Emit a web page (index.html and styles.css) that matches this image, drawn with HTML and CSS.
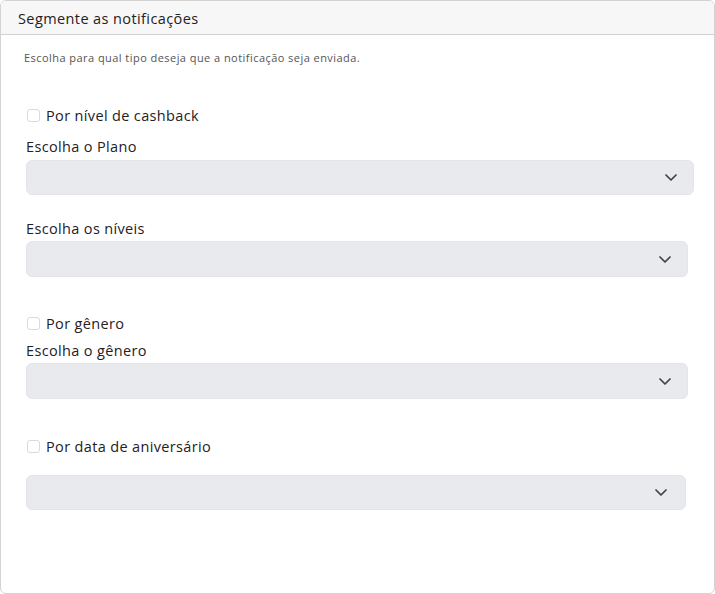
FILE: index.html
```html
<!DOCTYPE html>
<html lang="pt-BR">
<head>
<meta charset="utf-8">
<title>Segmente as notificações</title>
<link rel="stylesheet" href="styles.css">
</head>
<body>
<div class="card">
  <div class="card-header">Segmente as notificações</div>
  <div class="card-body">
    <p class="desc">Escolha para qual tipo deseja que a notificação seja enviada.</p>

    <label class="check check-first"><span class="box"></span>Por nível de cashback</label>
    <div class="field-label fl-a">Escolha o Plano</div>
    <div class="select sel-1"><svg class="chev" width="12" height="7" viewBox="0 0 12 7"><path d="M1 1l5 5 5-5" fill="none" stroke="#3f4247" stroke-width="1.7" stroke-linecap="round" stroke-linejoin="round"/></svg></div>
    <div class="field-label fl-b">Escolha os níveis</div>
    <div class="select sel-2"><svg class="chev" width="12" height="7" viewBox="0 0 12 7"><path d="M1 1l5 5 5-5" fill="none" stroke="#3f4247" stroke-width="1.7" stroke-linecap="round" stroke-linejoin="round"/></svg></div>

    <label class="check check-mid"><span class="box"></span>Por gênero</label>
    <div class="field-label fl-c">Escolha o gênero</div>
    <div class="select sel-2"><svg class="chev" width="12" height="7" viewBox="0 0 12 7"><path d="M1 1l5 5 5-5" fill="none" stroke="#3f4247" stroke-width="1.7" stroke-linecap="round" stroke-linejoin="round"/></svg></div>

    <label class="check check-last"><span class="box"></span>Por data de aniversário</label>
    <div class="select sel-4"><svg class="chev" width="12" height="7" viewBox="0 0 12 7"><path d="M1 1l5 5 5-5" fill="none" stroke="#3f4247" stroke-width="1.7" stroke-linecap="round" stroke-linejoin="round"/></svg></div>
  </div>
</div>
</body>
</html>
```
FILE: styles.css
```css
* { box-sizing: border-box; }
html, body { margin: 0; padding: 0; background: #fff; }
body {
  font-family: "Open Sans", "Noto Sans", sans-serif;
  color: #1f2124;
  width: 715px;
  height: 594px;
}
.card {
  width: 715px;
  height: 594px;
  border: 1px solid #d3d3d3;
  border-radius: 6px;
  overflow: hidden;
  display: flex;
  flex-direction: column;
}
.card-header {
  height: 34px;
  flex: none;
  background: #f7f7f7;
  border-bottom: 1px solid #d2d2d2;
  padding-left: 17px;
  display: flex;
  align-items: center;
  font-size: 14.5px;
  letter-spacing: 0.4px;
  color: #222;
  padding-top: 1px;
}
.card-body {
  padding-left: 25px;
  display: flex;
  flex-direction: column;
  align-items: flex-start;
}
.desc {
  margin: 15px 0 0 -2px;
  font-size: 11px;
  letter-spacing: 0.45px;
  line-height: 16px;
  color: #555;
}
.check {
  display: flex;
  align-items: center;
  height: 20px;
  font-size: 14.5px;
  letter-spacing: 0.35px;
  color: #1f2124;
}
.check-first { margin-top: 39px; }
.check-mid { margin-top: 36px; }
.check-last { margin-top: 37px; }
.box {
  width: 13px;
  height: 13px;
  border: 1px solid #d8dade;
  border-radius: 3px;
  background: #fff;
  margin: 0 6px 0 1px;
  flex: none;
}
.field-label {
  height: 20px;
  line-height: 20px;
  font-size: 14.5px;
  letter-spacing: 0.35px;
  color: #1f2124;
  margin-bottom: 3px;
}
.fl-a { margin-top: 12px; }
.fl-b { margin-top: 24px; margin-bottom: 2px; }
.fl-c { margin-top: 8px; margin-bottom: 2px; }
.select {
  height: 36px;
  background: #e8eaed;
  border: 1px solid #e3e5e8;
  border-radius: 6px;
  display: flex;
  align-items: center;
  justify-content: flex-end;
}
.sel-1 { width: 668px; height: 35px; padding-right: 16px; }
.sel-2 { width: 662px; padding-right: 16px; }
.sel-4 { width: 660px; height: 35px; margin-top: 19px; padding-right: 18px; }
.chev { display: block; }
```
